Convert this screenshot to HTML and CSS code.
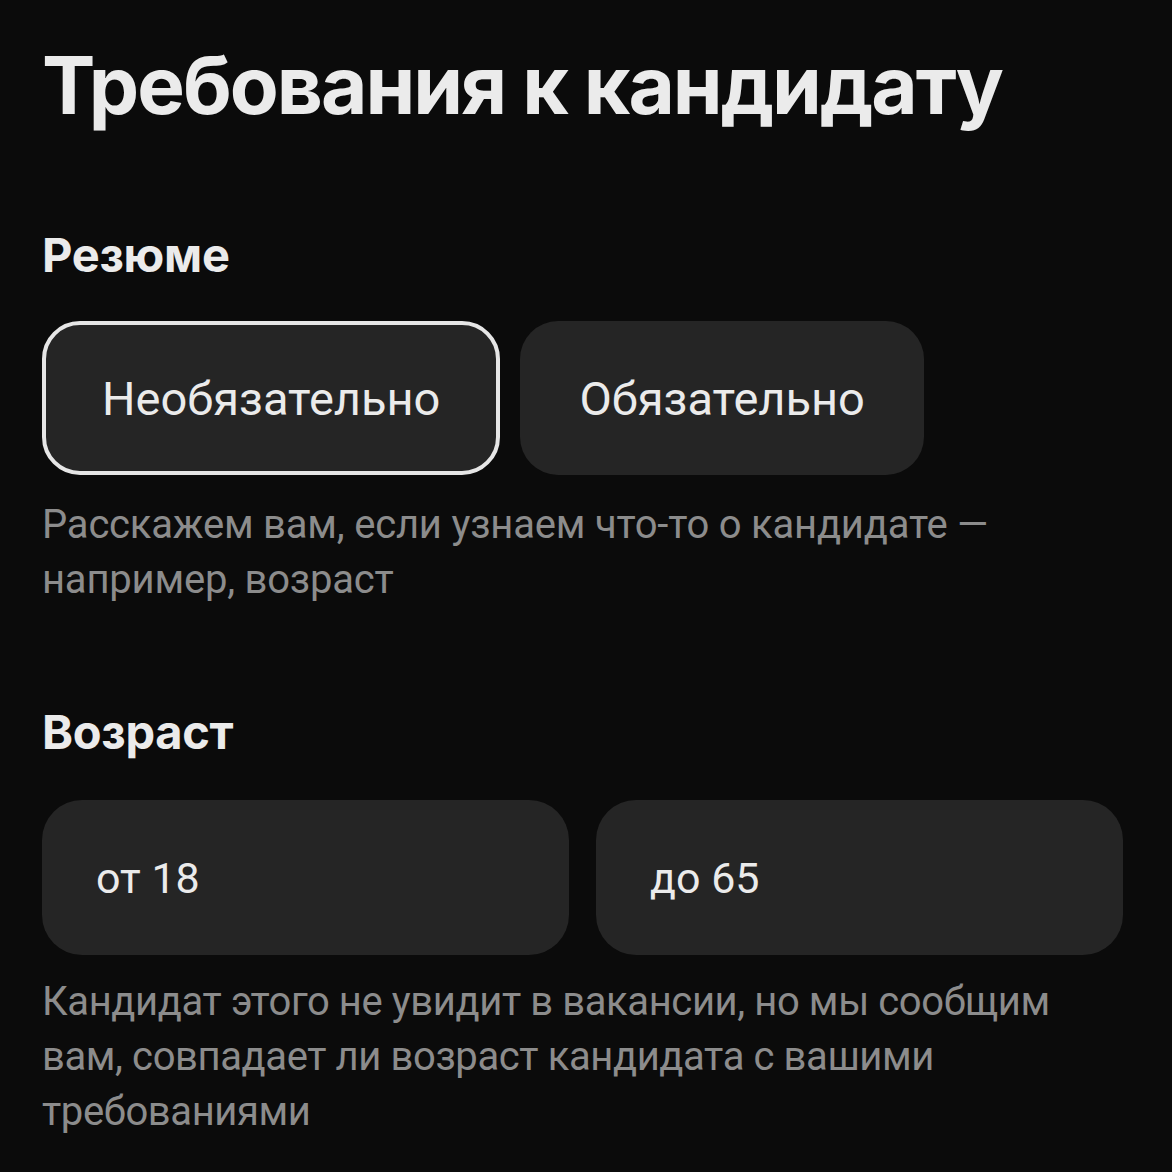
FILE: index.html
```html
<!DOCTYPE html>
<html lang="ru">
<head>
<meta charset="utf-8">
<title>Требования к кандидату</title>
<link rel="stylesheet" href="styles.css">
</head>
<body>
<main class="page">
  <h1 class="title">Требования к кандидату</h1>

  <section class="block block-resume">
    <h2 class="block-title">Резюме</h2>
    <div class="options">
      <button class="option option-active" type="button">Необязательно</button>
      <button class="option" type="button">Обязательно</button>
    </div>
    <p class="hint">Расскажем вам, если узнаем что-то о кандидате — например, возраст</p>
  </section>

  <section class="block block-age">
    <h2 class="block-title">Возраст</h2>
    <div class="range">
      <div class="field"><span class="field-value">от 18</span></div>
      <div class="field"><span class="field-value">до 65</span></div>
    </div>
    <p class="hint">Кандидат этого не увидит в вакансии, но мы сообщим вам, совпадает ли возраст кандидата с вашими требованиями</p>
  </section>
</main>
</body>
</html>
```

FILE: styles.css
```css
* { box-sizing: border-box; }

html, body {
  margin: 0;
  padding: 0;
  background: #0b0b0b;
}

body {
  font-family: Roboto, "Noto Sans", sans-serif;
  color: #ebebeb;
}

.page {
  width: 1172px;
  height: 1172px;
  padding: 37px 49px 0 42px;
  overflow: hidden;
}

.title {
  margin: 0;
  font-family: Inter, "Noto Sans", sans-serif;
  font-weight: 700;
  font-size: 80px;
  line-height: 96px;
  letter-spacing: -2px;
  color: #ebebeb;
}

.block-title {
  margin: 0;
  font-family: Inter, "Noto Sans", sans-serif;
  font-weight: 700;
  font-size: 47px;
  line-height: 56px;
  letter-spacing: -0.3px;
  color: #ebebeb;
}

.block-resume { margin-top: 94px; }
.block-age { margin-top: 97px; }

.options {
  display: flex;
  gap: 20px;
  margin-top: 38px;
}

.option {
  height: 154px;
  padding: 0 56px;
  border: 4px solid transparent;
  border-radius: 38px;
  background: #252525;
  color: #ebebeb;
  font-family: Roboto, "Noto Sans", sans-serif;
  font-size: 47px;
  font-weight: 400;
  cursor: pointer;
}

.option:not(.option-active) {
  padding: 0 55px;
}

.option-active {
  border-color: #e6e6e6;
}

.hint {
  margin: 22px 0 0;
  font-size: 40px;
  line-height: 55px;
  color: #8c8c8c;
  letter-spacing: -0.2px;
}

.block-age .hint {
  margin-top: 19px;
  letter-spacing: -0.4px;
}

.range {
  display: grid;
  grid-template-columns: 1fr 1fr;
  gap: 27px;
  margin-top: 40px;
}

.field {
  height: 155px;
  border-radius: 40px;
  background: #252525;
  display: flex;
  align-items: center;
  padding: 0 54px;
}

.field-value {
  font-size: 43px;
  color: #ebebeb;
}
```
